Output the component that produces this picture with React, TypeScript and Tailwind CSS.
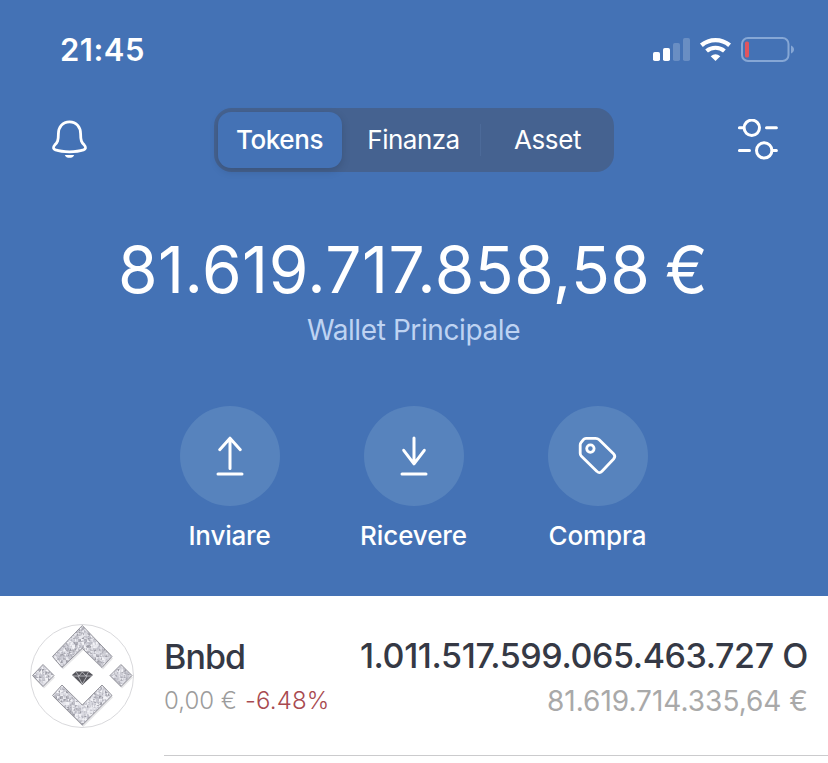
import React from "react";

const facetFills = ["#e9e9ef", "#b9b9c3", "#d6d6de", "#9c9ca6", "#c9c9d2", "#dfdfe7", "#adadb7", "#f4f4f8", "#c0c0ca"];

function buildFacets() {
  const out: { d: string; fill: string }[] = [];
  let seed = 7;
  const next = () => {
    seed = (seed * 1103515245 + 12345) % 2147483648;
    return seed / 2147483648;
  };
  const step = 3;
  for (let y = 0; y < 104; y += step) {
    for (let x = 0; x < 104; x += step) {
      const cx = x + next() * step;
      const cy = y + next() * step;
      const corners = [
        [x, y],
        [x + step, y],
        [x + step, y + step],
        [x, y + step],
      ];
      corners.forEach((c, i) => {
        const n = corners[(i + 1) % 4];
        out.push({
          d: `M${c[0]} ${c[1]}L${n[0]} ${n[1]}L${cx.toFixed(1)} ${cy.toFixed(1)}Z`,
          fill: facetFills[Math.floor(next() * facetFills.length)],
        });
      });
    }
  }
  return out;
}

const facets = buildFacets();
const shapes =
  "M52.3 1.5L82 32.5L72 43.5L52.3 24.3L32 43.5L22.5 32.5Z M13 40.5L24 51.5L13 62.5L2.5 51.5Z M91 40.5L102 51.5L91 62.5L80 51.5Z M32 61L52.3 81L72 61L82 71.5L52.3 101L22.5 71.5Z";

function TokenLogo() {
  return (
    <svg viewBox="0 0 104 104" className="h-[104px] w-[104px] shrink-0">
      <defs>
        <clipPath id="gemShapes">
          <path d={shapes} />
        </clipPath>
      </defs>
      <circle cx="52" cy="52" r="51.5" fill="#fff" stroke="#d9d9dc" />
      <path d={shapes} transform="translate(1 2)" fill="#d5d5d8" opacity="0.6" />
      <g clipPath="url(#gemShapes)">
        {facets.map((f, i) => (
          <path key={i} d={f.d} fill={f.fill} />
        ))}
      </g>
      <path d={shapes} fill="none" stroke="#94949c" strokeWidth="1" />
      <path d="M46 47.5H58.5L63 51L52.3 61L42 51Z" fill="#55555b" />
      <path d="M46 48L49 52L52.3 48L56 52L58.5 48M43 52H62M48 52L52.3 60L57 52" fill="none" stroke="#d6d6db" strokeWidth="0.7" />
    </svg>
  );
}

function StatusIcons() {
  return (
    <svg viewBox="0 0 146 30" className="h-[30px] w-[146px]" fill="none">
      <g fill="#fff">
        <rect x="1" y="17" width="7" height="9" rx="1.8" />
        <rect x="11" y="13" width="7" height="13" rx="1.8" />
        <rect x="21" y="8" width="7" height="18" rx="1.8" opacity="0.2" />
        <rect x="31" y="3" width="7" height="23" rx="1.8" opacity="0.2" />
      </g>
      <path d="M49.4 10.2A22 22 0 0 1 77.6 10.2" stroke="#fff" strokeWidth="4.4" />
      <path d="M54.6 16A13.8 13.8 0 0 1 72.4 16" stroke="#fff" strokeWidth="4.2" />
      <path d="M63.5 26L58.7 21.3Q63.5 17.4 68.3 21.3Z" fill="#fff" />
      <rect x="90" y="3" width="46.5" height="23" rx="6" stroke="#86a7d5" strokeWidth="2" />
      <rect x="93" y="6.5" width="4" height="16" rx="1.6" fill="#e0555f" />
      <path d="M139 10.5C143 12 143 17 139 18.5Z" fill="#86a7d5" />
    </svg>
  );
}

function BellIcon() {
  return (
    <svg viewBox="0 0 40 42" className="h-[42px] w-10" fill="none" stroke="#fff" strokeWidth="2.8" strokeLinejoin="round">
      <path d="M19.5 2.8C12.4 2.8 8.4 8.3 8.4 14.8C8.4 21.5 7.5 23.3 4.7 26.1C2.7 28.2 3.2 30 5.5 30.9C9.5 32.3 14.5 32.8 19.5 32.8S29.5 32.3 33.5 30.9C35.8 30 36.3 28.2 34.3 26.1C31.5 23.3 30.6 21.5 30.6 14.8C30.6 8.3 26.6 2.8 19.5 2.8Z" />
      <path d="M14.8 36H24.2C23 39.8 16 39.8 14.8 36Z" fill="#fff" stroke="none" />
    </svg>
  );
}

function FilterIcon() {
  return (
    <svg viewBox="0 0 42 42" className="h-[42px] w-[42px]" fill="none" stroke="#fff" strokeWidth="3" strokeLinecap="round">
      <circle cx="14.8" cy="8.8" r="7.7" />
      <circle cx="27.2" cy="31.4" r="7.7" />
      <path d="M2.4 8.8H6.5M29.5 8.8H39.4M2.4 31.4H12.5M35.5 31.4H39.4" />
    </svg>
  );
}

function SendIcon() {
  return (
    <svg viewBox="0 0 100 100" className="h-full w-full" fill="none" stroke="#fff" strokeWidth="3" strokeLinecap="round" strokeLinejoin="round">
      <path d="M50 62.5V32.5M39.7 43.7L50 32.2L60.3 43.7M38 68H62" />
    </svg>
  );
}

function ReceiveIcon() {
  return (
    <svg viewBox="0 0 100 100" className="h-full w-full" fill="none" stroke="#fff" strokeWidth="3" strokeLinecap="round" strokeLinejoin="round">
      <path d="M50 32V57.5M39.7 44.3L50 57.8L60.3 44.3M38 68H62" />
    </svg>
  );
}

function TagIcon() {
  return (
    <svg viewBox="0 0 100 100" className="h-full w-full" fill="none" stroke="#fff" strokeWidth="2.8" strokeLinejoin="round">
      <path d="M38 32.3H47.5Q49.7 32.3 51.2 33.7L65.5 47.8Q68 50.3 65.6 53L54 65.3Q51.5 68 49 65.4L33.2 50Q32.2 49 32.2 47.2V39Q32.2 37.7 33 36.7L35.4 33.6Q36.4 32.3 38 32.3Z" />
      <circle cx="42.4" cy="42.6" r="3.7" />
    </svg>
  );
}

const actions = [
  { label: "Inviare", icon: <SendIcon />, text: "tracking-[-0.2px]" },
  { label: "Ricevere", icon: <ReceiveIcon />, text: "tracking-[-0.1px]" },
  { label: "Compra", icon: <TagIcon />, text: "tracking-[-0.1px]" },
];

export default function App() {
  return (
    <div className="h-[763px] w-[828px] overflow-hidden whitespace-nowrap bg-white font-['Inter','Liberation_Sans',sans-serif]">
      <header className="h-[596px] bg-[#4472b5] text-white">
        <div className="flex h-[108px] items-start justify-between pt-[35px] pr-[30px] pl-[60px]">
          <span className="text-[31px] leading-[30px] font-semibold tracking-[0.5px]">21:45</span>
          <StatusIcons />
        </div>
        <div className="flex h-16 items-center justify-between pr-[49px] pl-[50px]">
          <BellIcon />
          <div className="ml-[1px] flex h-16 w-[400px] items-center rounded-[18px] bg-[#456290] p-1 text-[26px] leading-8">
            <div className="flex h-14 w-[124px] items-center justify-center rounded-[13px] bg-[#4472b5] pr-[1px] font-medium tracking-[-0.4px] shadow-[0_3px_8px_rgba(0,0,0,0.15)]">Tokens</div>
            <div className="flex h-8 w-[139px] items-center justify-center border-r border-[#4c6a99] pl-[5px] tracking-[-0.5px]">Finanza</div>
            <div className="flex h-8 flex-1 items-center justify-center pl-1 tracking-[-0.4px]">Asset</div>
          </div>
          <FilterIcon />
        </div>
        <div className="flex flex-col items-center pt-[58px]">
          <h1 className="h-20 pr-[2px] text-[64px] leading-[80px] font-normal tracking-[0.5px] [word-spacing:-4px]">81.619.717.858,58 €</h1>
          <p className="mt-[2px] h-9 pr-[1px] text-[28px] leading-9 tracking-[-0.4px] text-[#bed3f2]">Wallet Principale</p>
        </div>
        <div className="mt-[58px] flex justify-center gap-[44px]">
          {actions.map((a) => (
            <div key={a.label} className="flex w-[140px] flex-col items-center">
              <div className="h-[100px] w-[100px] rounded-full bg-[#5783bd]">{a.icon}</div>
              <span className={"mt-[14px] pr-[1px] text-[26px] leading-8 font-medium " + a.text}>{a.label}</span>
            </div>
          ))}
        </div>
      </header>
      <main className="flex h-[160px] pl-[30px]">
        <div className="pt-[28px]">
          <TokenLogo />
        </div>
        <div className="ml-[30px] flex flex-1 justify-between border-b border-[#cbcbcd] pt-10 pr-5">
          <div>
            <div className="h-11 text-[34px] leading-[42px] font-medium tracking-[-0.9px] text-[#353945]">Bnbd</div>
            <div className="mt-[3px] flex h-9 gap-[8px] text-[24px] leading-9 font-light">
              <span className="text-[#9c9c9c]">0,00 €</span>
              <span className="tracking-[0.15px] text-[#a84a50]">-6.48%</span>
            </div>
          </div>
          <div className="flex flex-col items-end">
            <div className="h-11 text-[34px] leading-[40px] font-medium tracking-[-0.4px] text-[#353945]">1.011.517.599.065.463.727 O</div>
            <div className="mt-[3px] h-9 text-[28px] leading-9 text-[#a9a9a9]">81.619.714.335,64 €</div>
          </div>
        </div>
      </main>
    </div>
  );
}
